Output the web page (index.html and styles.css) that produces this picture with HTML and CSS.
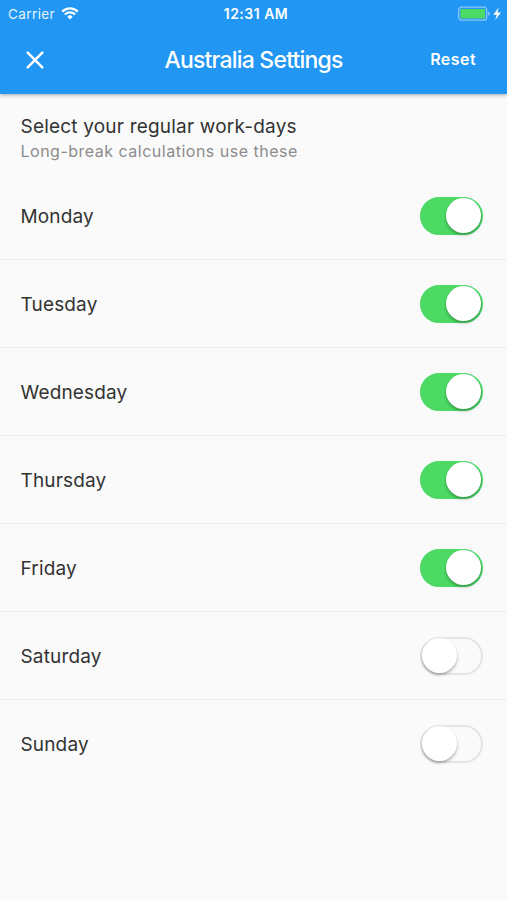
FILE: index.html
```html
<!DOCTYPE html>
<html lang="en">
<head>
    <meta charset="UTF-8">
    <meta name="viewport" content="width=device-width, initial-scale=1.0">
    <title>Australia Settings</title>
    <link rel="stylesheet" href="styles.css">
</head>
<body>
    <header class="header">
        <div class="status-bar">
            <div class="status-left">
                <span class="carrier">Carrier</span>
                <svg class="wifi" width="18" height="13" viewBox="0 0 18 13" fill="none" stroke="#fff" stroke-width="2.3">
                    <path d="M1.2 4.6 A11 11 0 0 1 16.8 4.6"/>
                    <path d="M3.9 7.5 A7.2 7.2 0 0 1 14.1 7.5"/>
                    <path d="M9 12.4 L6.3 9.7 A3.8 3.8 0 0 1 11.7 9.7 Z" fill="#fff" stroke="none"/>
                </svg>
            </div>
            <span class="time">12:31 AM</span>
            <div class="status-right">
                <svg width="44" height="16" viewBox="0 0 44 16">
                    <rect x="0.7" y="1.2" width="28" height="13" rx="3" fill="none" stroke="#8ac6f9" stroke-width="1.3"/>
                    <rect x="2.4" y="2.9" width="24.6" height="9.6" rx="1" fill="#4cd964"/>
                    <path d="M30.2 5.5 Q32 6.1 32 7.7 Q32 9.3 30.2 9.9 Z" fill="#8ac6f9"/>
                    <path d="M40.7 1.6 L35.2 8.7 H38.6 L37.3 13.9 L43 6.6 H39.4 Z" fill="#fff"/>
                </svg>
            </div>
        </div>
        <div class="nav-bar">
            <div class="close">
                <svg width="18" height="18" viewBox="0 0 18 18" stroke="#fff" stroke-width="2.5" stroke-linecap="round">
                    <path d="M1.7 1.7 L16.3 16.3 M16.3 1.7 L1.7 16.3"/>
                </svg>
            </div>
            <h1 class="title">Australia Settings</h1>
            <span class="reset">Reset</span>
        </div>
    </header>

    <main>
        <div class="intro">
            <div class="intro-title">Select your regular work-days</div>
            <div class="intro-sub">Long-break calculations use these</div>
        </div>
        <div class="days">
            <div class="day"><span class="day-name">Monday</span><span class="toggle on"></span></div>
            <div class="day"><span class="day-name">Tuesday</span><span class="toggle on"></span></div>
            <div class="day"><span class="day-name">Wednesday</span><span class="toggle on"></span></div>
            <div class="day"><span class="day-name">Thursday</span><span class="toggle on"></span></div>
            <div class="day"><span class="day-name">Friday</span><span class="toggle on"></span></div>
            <div class="day"><span class="day-name">Saturday</span><span class="toggle"></span></div>
            <div class="day"><span class="day-name">Sunday</span><span class="toggle"></span></div>
        </div>
    </main>
</body>
</html>
```

FILE: styles.css
```css
* {
    box-sizing: border-box;
}

body {
    margin: 0;
    height: 900px;
    overflow: hidden;
    background: #fafafa;
    color: #333333;
    font-family: Inter, Roboto, sans-serif;
}

.header {
    height: 94px;
    background: #2196f3;
    color: #ffffff;
    box-shadow: 0 1px 4px rgba(0, 0, 0, 0.35);
}

.status-bar {
    display: grid;
    grid-template-columns: 1fr auto 1fr;
    align-items: center;
    height: 27px;
    padding: 0 5px 0 8px;
}

.status-left {
    display: flex;
    align-items: center;
    gap: 6px;
}

.carrier {
    font-size: 13.5px;
    letter-spacing: 0.4px;
    color: #e6f3fe;
}

.time {
    margin-left: 2px;
    font-size: 14px;
    font-weight: 600;
    letter-spacing: 0.5px;
}

.status-right {
    display: flex;
    justify-content: flex-end;
}

.nav-bar {
    display: grid;
    grid-template-columns: 1fr auto 1fr;
    align-items: center;
    height: 66px;
    padding: 0 26px;
}

.close {
    display: flex;
}

.title {
    margin: 0;
    font-size: 23px;
    font-weight: 500;
    letter-spacing: -0.8px;
}

.reset {
    justify-self: end;
    margin: 0 5px 2px 0;
    font-size: 16px;
    font-weight: 600;
    letter-spacing: 0.45px;
}

.intro {
    height: 78px;
    padding: 20px 20.5px 0;
}

.intro-title {
    padding-top: 1px;
    font-size: 19px;
    line-height: 24px;
    letter-spacing: 0.2px;
}

.intro-sub {
    font-size: 16px;
    line-height: 25px;
    letter-spacing: 0.5px;
    color: #8c8c8c;
}

.day {
    display: flex;
    align-items: center;
    justify-content: space-between;
    height: 88px;
    padding: 0 24px 0 20.5px;
    border-bottom: 1px solid #ededed;
}

.day:last-child {
    border-bottom-color: transparent;
}

.day-name {
    padding-top: 2px;
    font-size: 19px;
    letter-spacing: 0.15px;
}

.toggle {
    display: flex;
    align-items: center;
    width: 63px;
    height: 38px;
    border: 2px solid #e5e5e5;
    border-radius: 19px;
}

.toggle::before {
    content: "";
    width: 35px;
    height: 35px;
    margin-left: -0.5px;
    border-radius: 50%;
    background: #ffffff;
    box-shadow: 0 2px 3px rgba(0, 0, 0, 0.3);
}

.toggle.on {
    justify-content: flex-end;
    border-color: #4cd964;
    background: #4cd964;
}
```
